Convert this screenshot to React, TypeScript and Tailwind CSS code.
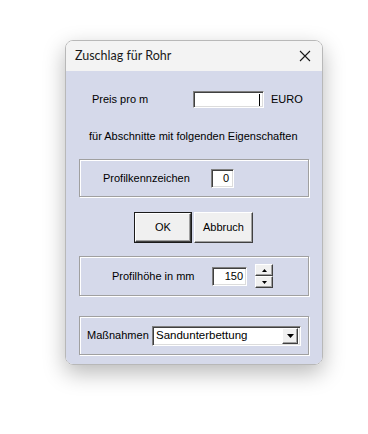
import React from "react";

const sunken =
  "border border-t-[#7f7f7f] border-l-[#7f7f7f] border-r-white border-b-white shadow-[inset_1px_1px_0_#404040,inset_-1px_-1px_0_#dcdcdc] bg-white";
const group =
  "border border-[#a0a0a0] shadow-[inset_1px_1px_0_#ffffff,1px_1px_0_#ffffff]";
const raised =
  "bg-[#f0f0f0] border border-t-white border-l-white border-r-[#404040] border-b-[#404040] shadow-[inset_-1px_-1px_0_#a0a0a0]";

export default function App() {
  return (
    <div className="w-[368px] h-[434px] bg-white overflow-hidden" style={{ fontFamily: '"Liberation Sans", Arial, sans-serif' }}>
      <div className="ml-[65px] mt-[40px] w-[258px] h-[325px] rounded-[8px] overflow-hidden border border-[#b8b8b8] shadow-[0_8px_22px_rgba(0,0,0,0.28)] flex flex-col">
        <div className="h-[30px] bg-[#f3f3f3] flex items-center justify-between pl-[9px] pr-[9px] shrink-0">
          <span className="text-[12.5px] text-[#1a1a1a]" style={{ fontFamily: 'Lato, "Noto Sans", sans-serif' }}>
            Zuschlag für Rohr
          </span>
          <svg width="12" height="12" viewBox="0 0 12 12" className="mr-[2px]">
            <path d="M1 1 L11 11 M11 1 L1 11" stroke="#1a1a1a" strokeWidth="1.1" />
          </svg>
        </div>
        <div className="flex-1 bg-[#d5d9ea] flex flex-col text-[11px] text-black">
          <div className="flex items-center mt-[20px] pl-[26px] h-[17px]">
            <span className="w-[101px]">Preis pro m</span>
            <div className={`${sunken} w-[71px] h-[17px] flex items-center justify-end pr-[3px]`}>
              <div className="w-px h-[12px] bg-black" />
            </div>
            <span className="ml-[7px]">EURO</span>
          </div>
          <div className="mt-[22px] pl-[23px] h-[13px] leading-[13px]">für Abschnitte mit folgenden Eigenschaften</div>
          <div className={`${group} mt-[16px] mx-[13px] h-[38px] flex items-center`}>
            <span className="ml-[23px] w-[108px]">Profilkennzeichen</span>
            <div className={`${sunken} w-[23px] h-[19px] flex items-center justify-end pr-[4px]`}>0</div>
          </div>
          <div className="flex mt-[15px] pl-[68px] gap-[2px]">
            <button className="w-[58px] h-[31px] border border-[#1a1a1a] p-0 bg-[#f0f0f0]">
              <div className={`${raised} w-full h-full flex items-center justify-center text-[11px]`}>OK</div>
            </button>
            <button className={`${raised} w-[59px] h-[31px] flex items-center justify-center text-[11px]`}>Abbruch</button>
          </div>
          <div className={`${group} mt-[13px] mx-[13px] h-[40px] flex items-center`}>
            <span className="ml-[32px] w-[100px]">Profilhöhe in mm</span>
            <div className={`${sunken} w-[35px] h-[19px] flex items-center justify-end pr-[3px]`}>150</div>
            <div className="ml-[8px] flex flex-col">
              <div className={`${raised} w-[18px] h-[12px] flex items-center justify-center`}>
                <svg width="5" height="3" viewBox="0 0 5 3"><path d="M2.5 0 L5 3 L0 3Z" fill="#000" /></svg>
              </div>
              <div className={`${raised} w-[18px] h-[12px] flex items-center justify-center`}>
                <svg width="5" height="3" viewBox="0 0 5 3"><path d="M0 0 L5 0 L2.5 3Z" fill="#000" /></svg>
              </div>
            </div>
          </div>
          <div className={`${group} mt-[20px] mx-[13px] h-[39px] flex items-center`}>
            <span className="ml-[7px] w-[65px]">Maßnahmen</span>
            <div className={`${sunken} w-[149px] h-[20px] flex items-center justify-between pl-[3px] pr-[2px]`}>
              <span className="text-[11.5px]">Sandunterbettung</span>
              <div className={`${raised} w-[16px] h-[16px] flex items-center justify-center`}>
                <svg width="7" height="4" viewBox="0 0 7 4"><path d="M0 0 L7 0 L3.5 4Z" fill="#000" /></svg>
              </div>
            </div>
          </div>
        </div>
      </div>
    </div>
  );
}
